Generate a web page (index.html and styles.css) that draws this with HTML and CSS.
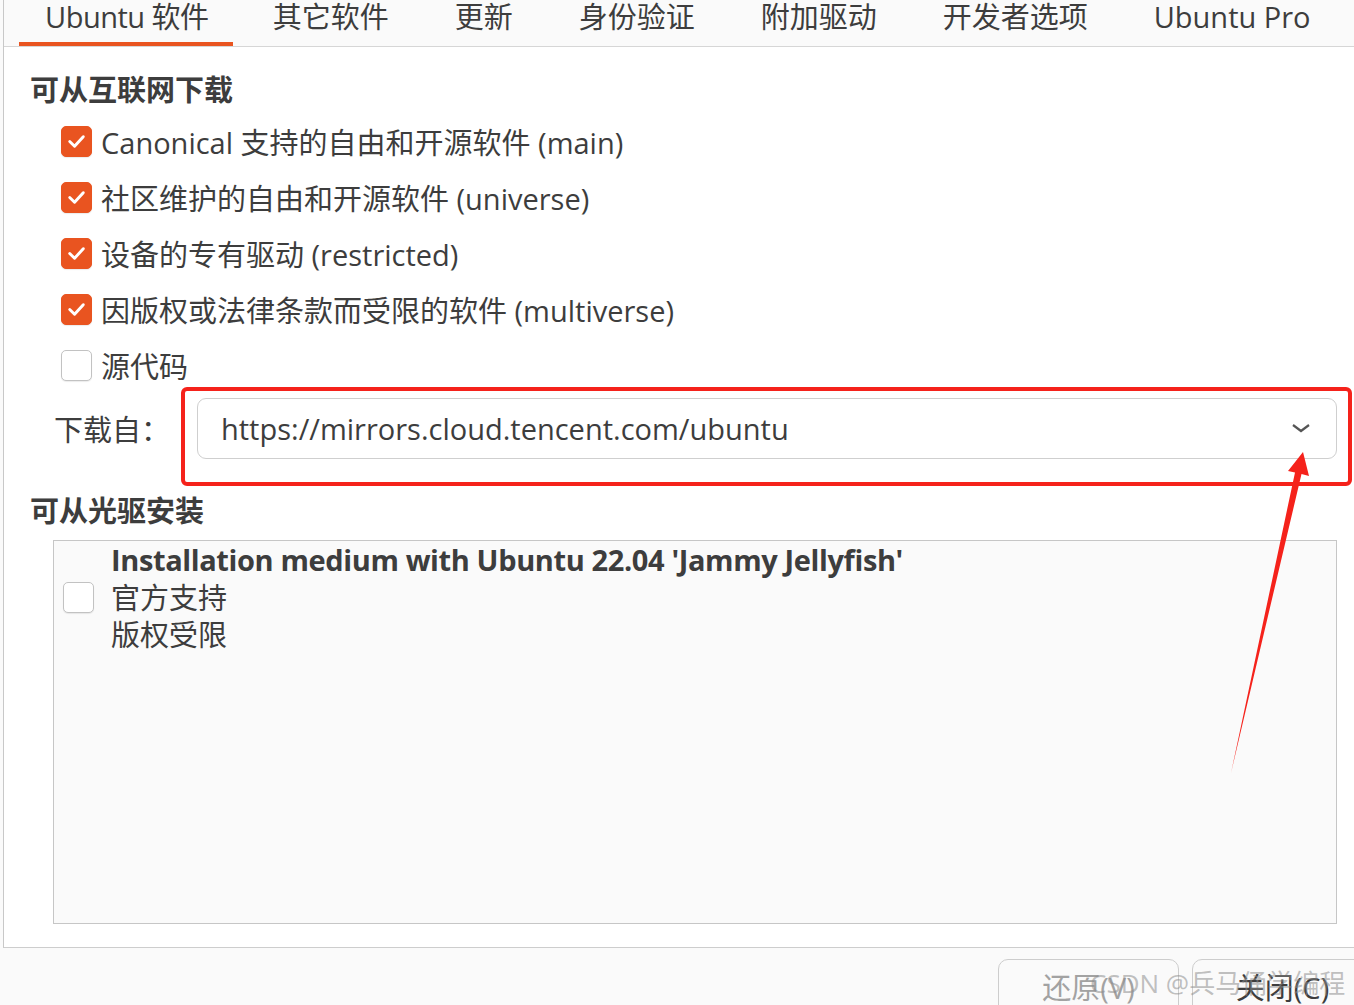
FILE: index.html
```html
<!DOCTYPE html>
<html lang="zh-CN">
<head>
    <meta charset="UTF-8">
    <meta name="viewport" content="width=device-width, initial-scale=1.0">
    <title>软件和更新</title>
    <link rel="stylesheet" href="styles.css">
</head>
<body>

<div class="window">
    <div class="notebook">
        <div class="tabs">
            <div class="tab active">Ubuntu 软件</div>
            <div class="tab">其它软件</div>
            <div class="tab">更新</div>
            <div class="tab">身份验证</div>
            <div class="tab">附加驱动</div>
            <div class="tab">开发者选项</div>
            <div class="tab">Ubuntu Pro</div>
        </div>

        <div class="page">
            <h2 class="section-title">可从互联网下载</h2>
            <ul class="components">
                <li class="option">
                    <span class="check on"><svg viewBox="0 0 30 30"><polyline points="8,15 13,20 22,10"/></svg></span>
                    Canonical 支持的自由和开源软件 (main)
                </li>
                <li class="option">
                    <span class="check on"><svg viewBox="0 0 30 30"><polyline points="8,15 13,20 22,10"/></svg></span>
                    社区维护的自由和开源软件 (universe)
                </li>
                <li class="option">
                    <span class="check on"><svg viewBox="0 0 30 30"><polyline points="8,15 13,20 22,10"/></svg></span>
                    设备的专有驱动 (restricted)
                </li>
                <li class="option">
                    <span class="check on"><svg viewBox="0 0 30 30"><polyline points="8,15 13,20 22,10"/></svg></span>
                    因版权或法律条款而受限的软件 (multiverse)
                </li>
                <li class="option">
                    <span class="check"></span>
                    源代码
                </li>
            </ul>

            <div class="mirror-row">
                <span class="mirror-label">下载自：</span>
                <div class="combo">
                    <span class="combo-value">https://mirrors.cloud.tencent.com/ubuntu</span>
                    <svg class="chevron" viewBox="0 0 20 10"><polyline points="2,2 10,8 18,2"/></svg>
                </div>
            </div>

            <h2 class="section-title second">可从光驱安装</h2>
            <div class="cdrom-list">
                <div class="cdrom-item">
                    <span class="check"></span>
                    <div class="cdrom-text">
                        <div class="cdrom-name">Installation medium with Ubuntu 22.04 'Jammy Jellyfish'</div>
                        <div>官方支持</div>
                        <div>版权受限</div>
                    </div>
                </div>
            </div>
        </div>
    </div>

    <div class="actions">
        <button class="btn" disabled>还原(V)</button>
        <button class="btn">关闭(C)</button>
    </div>

    <!-- red markup drawn over the screenshot -->
    <svg class="annotation" viewBox="0 0 1354 1005">
        <rect x="183" y="389" width="1167" height="95" rx="4"/>
        <polygon points="1303,452 1309,476 1301.5,474 1231,773 1295,472.5 1288,471"/>
    </svg>

    <div class="watermark">CSDN @兵马俑学编程</div>
</div>

</body>
</html>
```

FILE: styles.css
```css
body {
    margin: 0;
    background-color: #fafafa;
    font-family: "Open Sans", "Noto Sans CJK SC", sans-serif;
    font-size: 29px;
    color: #3d3d3d;
    overflow: hidden;
}

.window {
    position: relative;
    width: 1354px;
    height: 1005px;
    overflow: hidden;
}

.notebook {
    margin-left: 3px;
    border-left: 1px solid #c8c8c8;
    border-bottom: 1px solid #cdcdcd;
}

.tabs {
    display: flex;
    gap: 14px;
    height: 46px;
    padding-left: 15px;
    background-color: #fafafa;
    border-bottom: 1px solid #d6d6d6;
}

.tab {
    padding: 0 26px;
    line-height: 34px;
    height: 42px;
    border-bottom: 4px solid transparent;
    white-space: nowrap;
}

.tab.active {
    padding-right: 24px;
    letter-spacing: -0.5px;
    border-bottom-color: #e95420;
}

.page {
    box-sizing: border-box;
    height: 900px;
    padding: 23px 17px 0 26px;
    background-color: #ffffff;
}

.section-title {
    margin: 0;
    font-size: 29px;
    font-weight: bold;
    line-height: 40px;
}

.section-title.second {
    margin-top: 28px;
}

.components {
    list-style: none;
    margin: 3px 0 0 31px;
    padding: 0;
}

.option {
    display: flex;
    align-items: center;
    gap: 9px;
    height: 56px;
    white-space: nowrap;
}

.check {
    box-sizing: border-box;
    flex: none;
    width: 31px;
    height: 31px;
    border: 1px solid #c2c2c2;
    border-radius: 5px;
    background-color: #ffffff;
    box-shadow: 0 1px 1px rgba(0, 0, 0, 0.08);
}

.check.on {
    border-color: #e95420;
    background-color: #e95420;
}

.check svg {
    display: block;
    width: 29px;
    height: 29px;
}

.check polyline {
    fill: none;
    stroke: #ffffff;
    stroke-width: 3;
    stroke-linecap: round;
    stroke-linejoin: round;
}

.mirror-row {
    display: flex;
    align-items: center;
    height: 70px;
    padding-left: 24px;
}

.mirror-label {
    width: 143px;
    flex: none;
}

.combo {
    flex: 1;
    display: flex;
    align-items: center;
    justify-content: space-between;
    box-sizing: border-box;
    height: 61px;
    padding: 0 25px 0 23px;
    border: 1px solid #cfcfcf;
    border-radius: 9px;
    background-color: #ffffff;
}

.chevron {
    width: 20px;
    height: 10px;
}

.chevron polyline {
    fill: none;
    stroke: #555555;
    stroke-width: 2.2;
}

.cdrom-list {
    box-sizing: border-box;
    height: 384px;
    margin: 9px 0 0 23px;
    border: 1px solid #c6c6c6;
    background-color: #fafafa;
}

.cdrom-item {
    display: flex;
    align-items: center;
    gap: 17px;
    padding-left: 9px;
}

.cdrom-text {
    line-height: 37.5px;
    white-space: nowrap;
}

.cdrom-name {
    font-weight: bold;
    letter-spacing: -0.38px;
}

.actions {
    display: flex;
    justify-content: flex-end;
    gap: 13px;
    margin-right: -19px;
    padding-top: 11px;
}

.btn {
    width: 181px;
    height: 60px;
    padding: 0 0 6px;
    border: 1px solid #cdcdcd;
    border-radius: 10px;
    background-color: #fafafa;
    font-family: inherit;
    font-size: 29px;
    color: #3d3d3d;
}

.btn:disabled {
    color: #a2a2a2;
}

.annotation {
    position: absolute;
    left: 0;
    top: 0;
    width: 1354px;
    height: 1005px;
    pointer-events: none;
}

.annotation rect {
    fill: none;
    stroke: #f5221b;
    stroke-width: 4;
}

.annotation polygon {
    fill: #f5221b;
}

.watermark {
    position: absolute;
    left: 1090px;
    top: 964px;
    font-size: 26px;
    line-height: 38px;
    color: rgba(140, 140, 140, 0.55);
    white-space: nowrap;
    pointer-events: none;
}
```
